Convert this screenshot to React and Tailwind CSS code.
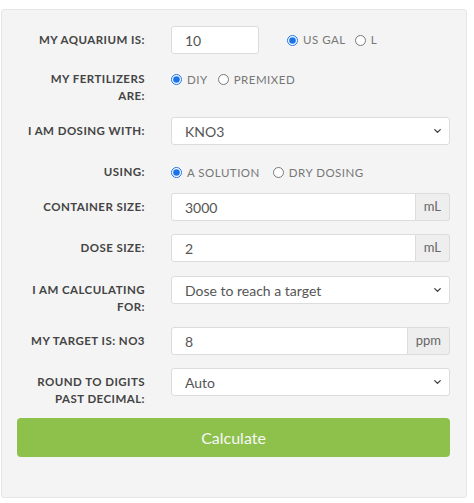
import { ChevronDown } from 'lucide-react';

const labelCls =
  "w-[128px] shrink-0 pt-[6px] text-right text-[11.5px] leading-[16.5px] font-bold uppercase tracking-[0.45px] text-[#444]";

const Row = ({ label, h, children }) => (
  <div className={`flex gap-[26px] ${h}`}>
    <div className={labelCls}>{label}</div>
    <div className="flex-1">{children}</div>
  </div>
);

const Radio = ({ checked, label }) => (
  <label className="flex items-center gap-[5px] text-[11.5px] uppercase tracking-[0.5px] text-[#777]">
    <input
      type="radio"
      defaultChecked={checked}
      className="w-[11px] h-[11px] accent-[#1a73e8]"
    />
    <span>{label}</span>
  </label>
);

const TextInput = ({ value, addon, className = "" }) => (
  <div className={`flex h-[28px] ${className}`}>
    <input
      defaultValue={value}
      className={`min-w-0 flex-1 h-full bg-white border border-[#dcdcdc] px-[13px] text-[14px] text-[#555] outline-none ${
        addon ? "rounded-l-[3px]" : "rounded-[3px]"
      }`}
    />
    {addon && (
      <span className="flex items-center justify-center h-full px-[8px] bg-[#eee] border border-l-0 border-[#dcdcdc] rounded-r-[3px] text-[13px] text-[#666]">
        {addon}
      </span>
    )}
  </div>
);

const Select = ({ value }) => (
  <div className="relative h-[28px]">
    <select
      defaultValue={value}
      className="w-full h-full appearance-none bg-white border border-[#dcdcdc] rounded-[3px] px-[13px] text-[14px] text-[#555] outline-none"
    >
      <option>{value}</option>
    </select>
    <ChevronDown
      size={11}
      strokeWidth={3}
      className="pointer-events-none absolute right-[7px] top-1/2 -translate-y-1/2 text-[#444]"
    />
  </div>
);

export default function App() {
  return (
    <div className="bg-white h-[503px] pt-[9px] pl-px" style={{ fontFamily: "Lato, 'Open Sans', sans-serif" }}>
      <div className="w-[466px] bg-[#f4f4f4] border border-[#e6e6e6] rounded-[3px] pt-[16px] pb-[40px] pl-[15px] pr-[16px]">
        <div className="flex flex-col">
          <Row label="My aquarium is:" h="h-[39px]">
            <div className="flex items-center gap-[28px]">
              <TextInput value="10" className="w-[88px] h-[27px]" />
              <div className="flex items-center gap-[9px]">
                <Radio checked label="US Gal" />
                <Radio label="L" />
              </div>
            </div>
          </Row>
          <Row label={<>My fertilizers<br />are:</>} h="h-[52px]">
            <div className="flex items-center gap-[10px] pt-[6px] h-[23px]">
              <Radio checked label="DIY" />
              <Radio label="Premixed" />
            </div>
          </Row>
          <Row label="I am dosing with:" h="h-[41px]">
            <Select value="KNO3" />
          </Row>
          <Row label="Using:" h="h-[35px]">
            <div className="flex items-center gap-[13px] pt-[6px] h-[23px]">
              <Radio checked label="A Solution" />
              <Radio label="Dry Dosing" />
            </div>
          </Row>
          <Row label="Container size:" h="h-[41px]">
            <TextInput value="3000" addon="mL" />
          </Row>
          <Row label="Dose size:" h="h-[42px]">
            <TextInput value="2" addon="mL" />
          </Row>
          <Row label={<>I am calculating<br />for:</>} h="h-[51px]">
            <Select value="Dose to reach a target" />
          </Row>
          <Row label="My target is: NO3" h="h-[41px]">
            <TextInput value="8" addon="ppm" />
          </Row>
          <Row label={<>Round to digits<br />past decimal:</>} h="h-[50px]">
            <Select value="Auto" />
          </Row>
          <button className="h-[39px] w-full rounded-[4px] bg-[#8dc14c] text-[16px] text-[#f7f7f7]">
            Calculate
          </button>
        </div>
      </div>
    </div>
  );
}
